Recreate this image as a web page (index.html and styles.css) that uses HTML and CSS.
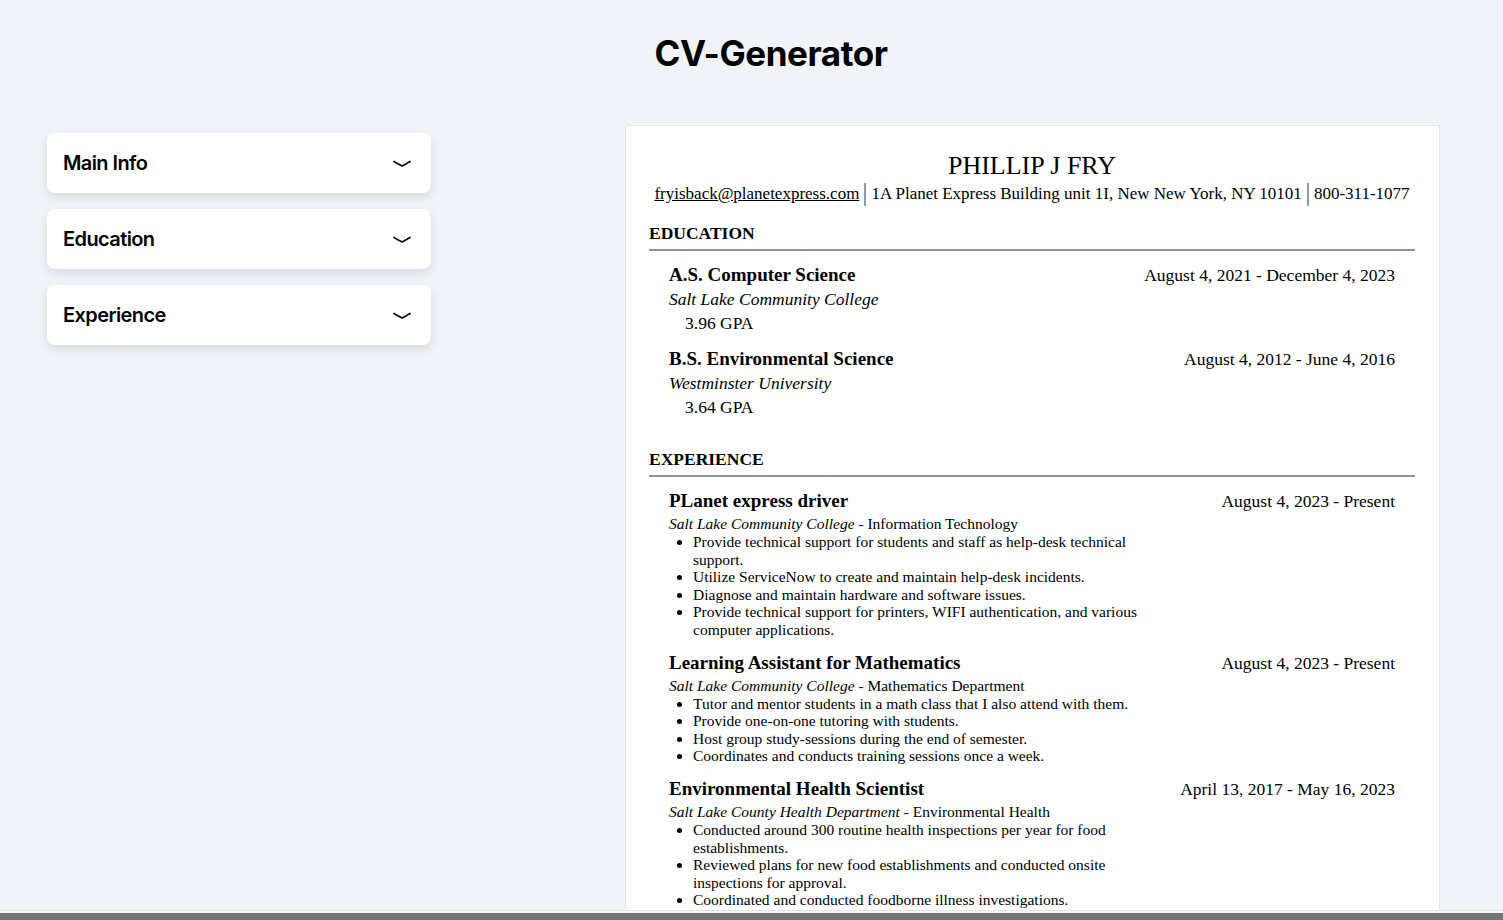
FILE: index.html
```html
<!DOCTYPE html>
<html lang="en">
<head>
<meta charset="utf-8">
<title>CV-Generator</title>
<link rel="stylesheet" href="styles.css">
</head>
<body>
<div class="app">
  <header class="top">
    <h1 class="title">CV-Generator</h1>
  </header>
  <main class="layout">
    <aside class="forms">
      <div class="card">
        <span class="card-label">Main Info</span>
        <svg class="chev" width="20" height="10" viewBox="0 0 20 10"><path d="M2 2.5 Q6 5 10 7 Q14 5 18 2.5" fill="none" stroke="#111" stroke-width="1.8" stroke-linecap="round"/></svg>
      </div>
      <div class="card">
        <span class="card-label">Education</span>
        <svg class="chev" width="20" height="10" viewBox="0 0 20 10"><path d="M2 2.5 Q6 5 10 7 Q14 5 18 2.5" fill="none" stroke="#111" stroke-width="1.8" stroke-linecap="round"/></svg>
      </div>
      <div class="card">
        <span class="card-label">Experience</span>
        <svg class="chev" width="20" height="10" viewBox="0 0 20 10"><path d="M2 2.5 Q6 5 10 7 Q14 5 18 2.5" fill="none" stroke="#111" stroke-width="1.8" stroke-linecap="round"/></svg>
      </div>
    </aside>
    <section class="preview">
      <div class="paper">
        <div class="name">PHILLIP J FRY</div>
        <div class="contact">
          <a class="email" href="#">fryisback@planetexpress.com</a>
          <span class="sep"></span>
          <span>1A Planet Express Building unit 1I, New New York, NY 10101</span>
          <span class="sep"></span>
          <span>800-311-1077</span>
        </div>

        <h2 class="section-head">EDUCATION</h2>
        <div class="entries">
          <div class="entry">
            <div class="entry-main">
              <div class="entry-title">A.S. Computer Science</div>
              <div class="school">Salt Lake Community College</div>
              <div class="gpa">3.96 GPA</div>
            </div>
            <div class="date">August 4, 2021 - December 4, 2023</div>
          </div>
          <div class="entry">
            <div class="entry-main">
              <div class="entry-title">B.S. Environmental Science</div>
              <div class="school">Westminster University</div>
              <div class="gpa">3.64 GPA</div>
            </div>
            <div class="date">August 4, 2012 - June 4, 2016</div>
          </div>
        </div>

        <h2 class="section-head exp-head">EXPERIENCE</h2>
        <div class="entries">
          <div class="entry">
            <div class="entry-main">
              <div class="entry-title">PLanet express driver</div>
              <div class="org"><em>Salt Lake Community College</em> - Information Technology</div>
              <ul class="duties">
                <li>Provide technical support for students and staff as help-desk technical support.</li>
                <li>Utilize ServiceNow to create and maintain help-desk incidents.</li>
                <li>Diagnose and maintain hardware and software issues.</li>
                <li>Provide technical support for printers, WIFI authentication, and various computer applications.</li>
              </ul>
            </div>
            <div class="date">August 4, 2023 - Present</div>
          </div>
          <div class="entry">
            <div class="entry-main">
              <div class="entry-title">Learning Assistant for Mathematics</div>
              <div class="org"><em>Salt Lake Community College</em> - Mathematics Department</div>
              <ul class="duties">
                <li>Tutor and mentor students in a math class that I also attend with them.</li>
                <li>Provide one-on-one tutoring with students.</li>
                <li>Host group study-sessions during the end of semester.</li>
                <li>Coordinates and conducts training sessions once a week.</li>
              </ul>
            </div>
            <div class="date">August 4, 2023 - Present</div>
          </div>
          <div class="entry">
            <div class="entry-main">
              <div class="entry-title">Environmental Health Scientist</div>
              <div class="org"><em>Salt Lake County Health Department</em> - Environmental Health</div>
              <ul class="duties">
                <li>Conducted around 300 routine health inspections per year for food establishments.</li>
                <li>Reviewed plans for new food establishments and conducted onsite inspections for approval.</li>
                <li>Coordinated and conducted foodborne illness investigations.</li>
              </ul>
            </div>
            <div class="date">April 13, 2017 - May 16, 2023</div>
          </div>
        </div>
      </div>
    </section>
  </main>
  <div class="hscroll"><div class="hscroll-thumb"></div></div>
</div>
</body>
</html>
```

FILE: styles.css
```css
* { box-sizing: border-box; }

html, body {
  margin: 0;
  padding: 0;
  height: 100%;
}

body {
  background: #f0f4f8;
  color: #000;
  font-family: "Inter", "Liberation Sans", sans-serif;
  overflow: hidden;
}

.app {
  height: 920px;
  display: flex;
  flex-direction: column;
}

.top {
  height: 125px;
  padding-left: 39px;
  text-align: center;
}

.title {
  margin: 0;
  padding-top: 31px;
  font-size: 35px;
  line-height: 44px;
  font-weight: 700;
  letter-spacing: -0.45px;
}

.layout {
  flex: 1;
  min-height: 0;
  display: grid;
  grid-template-columns: 384px 815px;
  column-gap: 194px;
  padding: 0 0 0 47px;
}

.forms {
  display: flex;
  flex-direction: column;
  gap: 16px;
  padding-top: 8px;
}

.card {
  height: 60px;
  background: #fff;
  border-radius: 8px;
  box-shadow: 0 4px 10px rgba(30, 40, 60, 0.12);
  display: flex;
  align-items: center;
  justify-content: space-between;
  padding: 0 19px 0 16px;
}

.card-label {
  font-size: 20px;
  font-weight: 600;
  letter-spacing: -0.6px;
}

.chev { display: block; margin-top: 1px; }

.preview {
  min-width: 0;
  min-height: 0;
  display: flex;
  flex-direction: column;
}

.paper {
  flex: 1;
  min-height: 0;
  overflow: hidden;
  background: #fff;
  border: 1px solid #e3e7ec;
  border-bottom: none;
  padding: 25px 24px 0 23px;
  font-family: "Liberation Serif", "DejaVu Serif", serif;
}

.name {
  text-align: center;
  font-size: 26px;
  line-height: 30px;
}

.contact {
  display: flex;
  justify-content: center;
  align-items: center;
  font-size: 17px;
  line-height: 24px;
  margin-top: 1px;
  white-space: nowrap;
}

.email { color: #000; }

.sep {
  width: 2px;
  height: 23px;
  background: #8d9ab0;
  margin: 0 5px;
}

.section-head {
  margin: 15px 0 0;
  font-size: 17.5px;
  line-height: 24px;
  font-weight: 700;
  padding-bottom: 4px;
  border-bottom: 2px solid #8796ab;
}

.exp-head { margin-top: 28px; }

.entries {
  display: flex;
  flex-direction: column;
  gap: 12px;
  padding: 12px 20px 0;
}

.entry {
  display: flex;
  justify-content: space-between;
  align-items: flex-start;
}

.entry-main { width: 490px; }

.entry-title {
  font-size: 19px;
  line-height: 24px;
  font-weight: 700;
}

.school {
  font-size: 17.5px;
  line-height: 24px;
  font-style: italic;
}

.gpa {
  font-size: 17.5px;
  line-height: 24px;
  padding-left: 16px;
}

.date {
  font-size: 17.5px;
  line-height: 24px;
  white-space: nowrap;
}

.org {
  font-size: 15.5px;
  line-height: 18px;
  margin-top: 2px;
}

.duties {
  margin: 0;
  padding-left: 24px;
  font-size: 15.5px;
  line-height: 17.6px;
}

.hscroll {
  height: 10px;
  flex: none;
  background: #fafafa;
  border-top: 1px solid #e4e4e4;
  padding-top: 2px;
}

.hscroll-thumb {
  height: 7px;
  background: #767676;
}
```
